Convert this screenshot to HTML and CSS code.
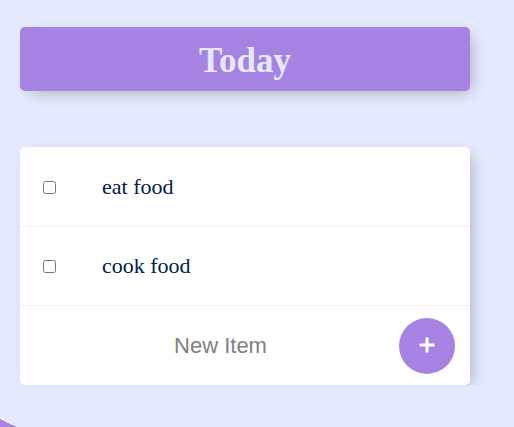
FILE: index.html
```html
<!DOCTYPE html>
<html>
<head>
<meta charset="utf-8">
<link rel="stylesheet" href="styles.css">
</head>
<body>
<main class="page">
  <div class="box heading">
    <h1 class="title">Today</h1>
  </div>
  <div class="box list">
    <div class="item first">
      <input class="check" type="checkbox">
      <p class="text">eat food</p>
    </div>
    <div class="item">
      <input class="check" type="checkbox">
      <p class="text">cook food</p>
    </div>
    <form class="item add">
      <input class="new" type="text" placeholder="New Item">
      <button class="plus" type="button" aria-label="Add">
        <svg width="18" height="18" viewBox="0 0 18 18"><path d="M9 1.5V16.5M1.5 9H16.5" stroke="#fff" stroke-width="3" fill="none"/></svg>
      </button>
    </form>
  </div>
</main>
</body>
</html>
```
FILE: styles.css
```css
html {
  background-color: #E4E9FD;
  background-image: linear-gradient(25deg, #A683E3 50%, #E4E9FD 50%);
  background-size: 100% 1078px;
  background-repeat: no-repeat;
  min-height: 100%;
}
body {
  margin: 0;
  font-family: "Liberation Sans", Arial, sans-serif;
}
.page {
  display: flex;
  flex-direction: column;
  padding: 27px 0 0 20px;
  gap: 56px;
}
.box {
  width: 450px;
  border-radius: 5px;
  box-shadow: 5px 5px 15px -5px rgba(0, 0, 0, 0.3);
}
.heading {
  background: #A683E3;
  height: 64px;
  display: flex;
  align-items: center;
  justify-content: center;
}
.title {
  margin: 0;
  font-family: "Liberation Serif", "Times New Roman", serif;
  font-weight: bold;
  font-size: 35px;
  color: #E4E9FD;
  line-height: 1;
  padding-top: 2px;
}
.list {
  background: #fff;
  display: flex;
  flex-direction: column;
}
.item {
  height: 78px;
  display: flex;
  align-items: center;
  border-bottom: 1px solid #F1F1F1;
}
.item.first {
  height: 79px;
}
.item:last-child {
  border-bottom: 0;
  height: 79px;
}
.check {
  margin: 1px 0 0 23px;
  width: 13px;
  height: 13px;
}
.text {
  margin: 0 0 0 46px;
  font-family: "Liberation Serif", "Times New Roman", serif;
  font-size: 22px;
  color: #00204a;
}
.add {
  margin: 0;
  padding: 0 15px 0 22px;
}
.new {
  flex: 1;
  min-width: 0;
  border: none;
  background: transparent;
  text-align: center;
  font-family: "Liberation Sans", Arial, sans-serif;
  font-size: 22px;
  height: 60px;
  padding: 0;
  outline: none;
}
.new::placeholder {
  color: grey;
  opacity: 1;
}
.plus {
  width: 56px;
  height: 56px;
  border-radius: 50%;
  border: 0;
  padding: 0 0 2px 0;
  background: #A683E3;
  display: flex;
  align-items: center;
  justify-content: center;
}
```
